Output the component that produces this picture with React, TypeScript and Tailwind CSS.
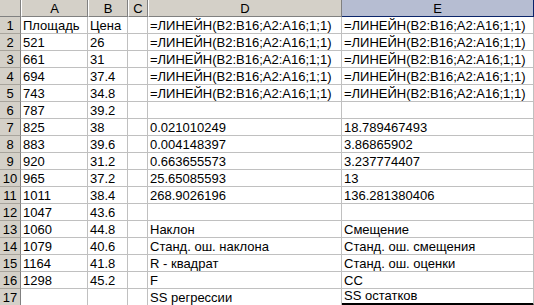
import React from "react";

// Лист Excel: ЛИНЕЙН по площади и цене
const cols = ["A", "B", "C", "D", "E"];
const widths = ["w-[67px]", "w-[40px]", "w-[20px]", "w-[194px]", "w-[192px]"];

const F = "=ЛИНЕЙН(B2:B16;A2:A16;1;1)";

const rows: string[][] = [
  ["Площадь", "Цена", "", F, F],
  ["521", "26", "", F, F],
  ["661", "31", "", F, F],
  ["694", "37.4", "", F, F],
  ["743", "34.8", "", F, F],
  ["787", "39.2", "", "", ""],
  ["825", "38", "", "0.021010249", "18.789467493"],
  ["883", "39.6", "", "0.004148397", "3.86865902"],
  ["920", "31.2", "", "0.663655573", "3.237774407"],
  ["965", "37.2", "", "25.65085593", "13"],
  ["1011", "38.4", "", "268.9026196", "136.281380406"],
  ["1047", "43.6", "", "", ""],
  ["1060", "44.8", "", "Наклон", "Смещение"],
  ["1079", "40.6", "", "Станд. ош. наклона", "Станд. ош. смещения"],
  ["1164", "41.8", "", "R - квадрат", "Станд. ош. оценки"],
  ["1298", "45.2", "", "F", "CC"],
  ["", "", "", "SS регрессии", "SS остатков"],
];

export default function App() {
  return (
    <div
      className="w-[534px] h-[305px] overflow-hidden bg-white text-black text-[13px]"
      style={{ fontFamily: '"Liberation Sans", Arial, sans-serif' }}
    >
      {/* заголовки столбцов */}
      <div className="flex h-[17px]">
        <div className="w-[21px] shrink-0 bg-[#d4d0c8] border-r border-b border-[#808080]" />
        {cols.map((c, i) => (
          <div
            key={c}
            className={
              widths[i] +
              " shrink-0 flex items-center justify-center leading-none border-b border-r " +
              (c === "E"
                ? "bg-[#b6bdd2] border-[#0a246a]"
                : "bg-[#d4d0c8] border-[#808080] border-l border-l-white")
            }
          >
            {c}
          </div>
        ))}
      </div>

      {rows.map((r, ri) => (
        <div key={ri} className="flex h-[17px]">
          <div className="w-[21px] shrink-0 bg-[#d4d0c8] border-r border-b border-r-[#808080] border-b-[#a8a49c] flex items-end justify-center leading-[15px] text-[13px]">
            {ri + 1}
          </div>
          {r.map((v, ci) => (
            <div
              key={ci}
              className={
                widths[ci] +
                " shrink-0 flex items-end pl-[2px] leading-[15px] whitespace-nowrap overflow-hidden border-r border-[#c0c0c0] " +
                (ri === rows.length - 1 && ci === 4 ? "border-b-[3px] border-b-black" : "border-b")
              }
            >
              {v}
            </div>
          ))}
        </div>
      ))}
    </div>
  );
}
